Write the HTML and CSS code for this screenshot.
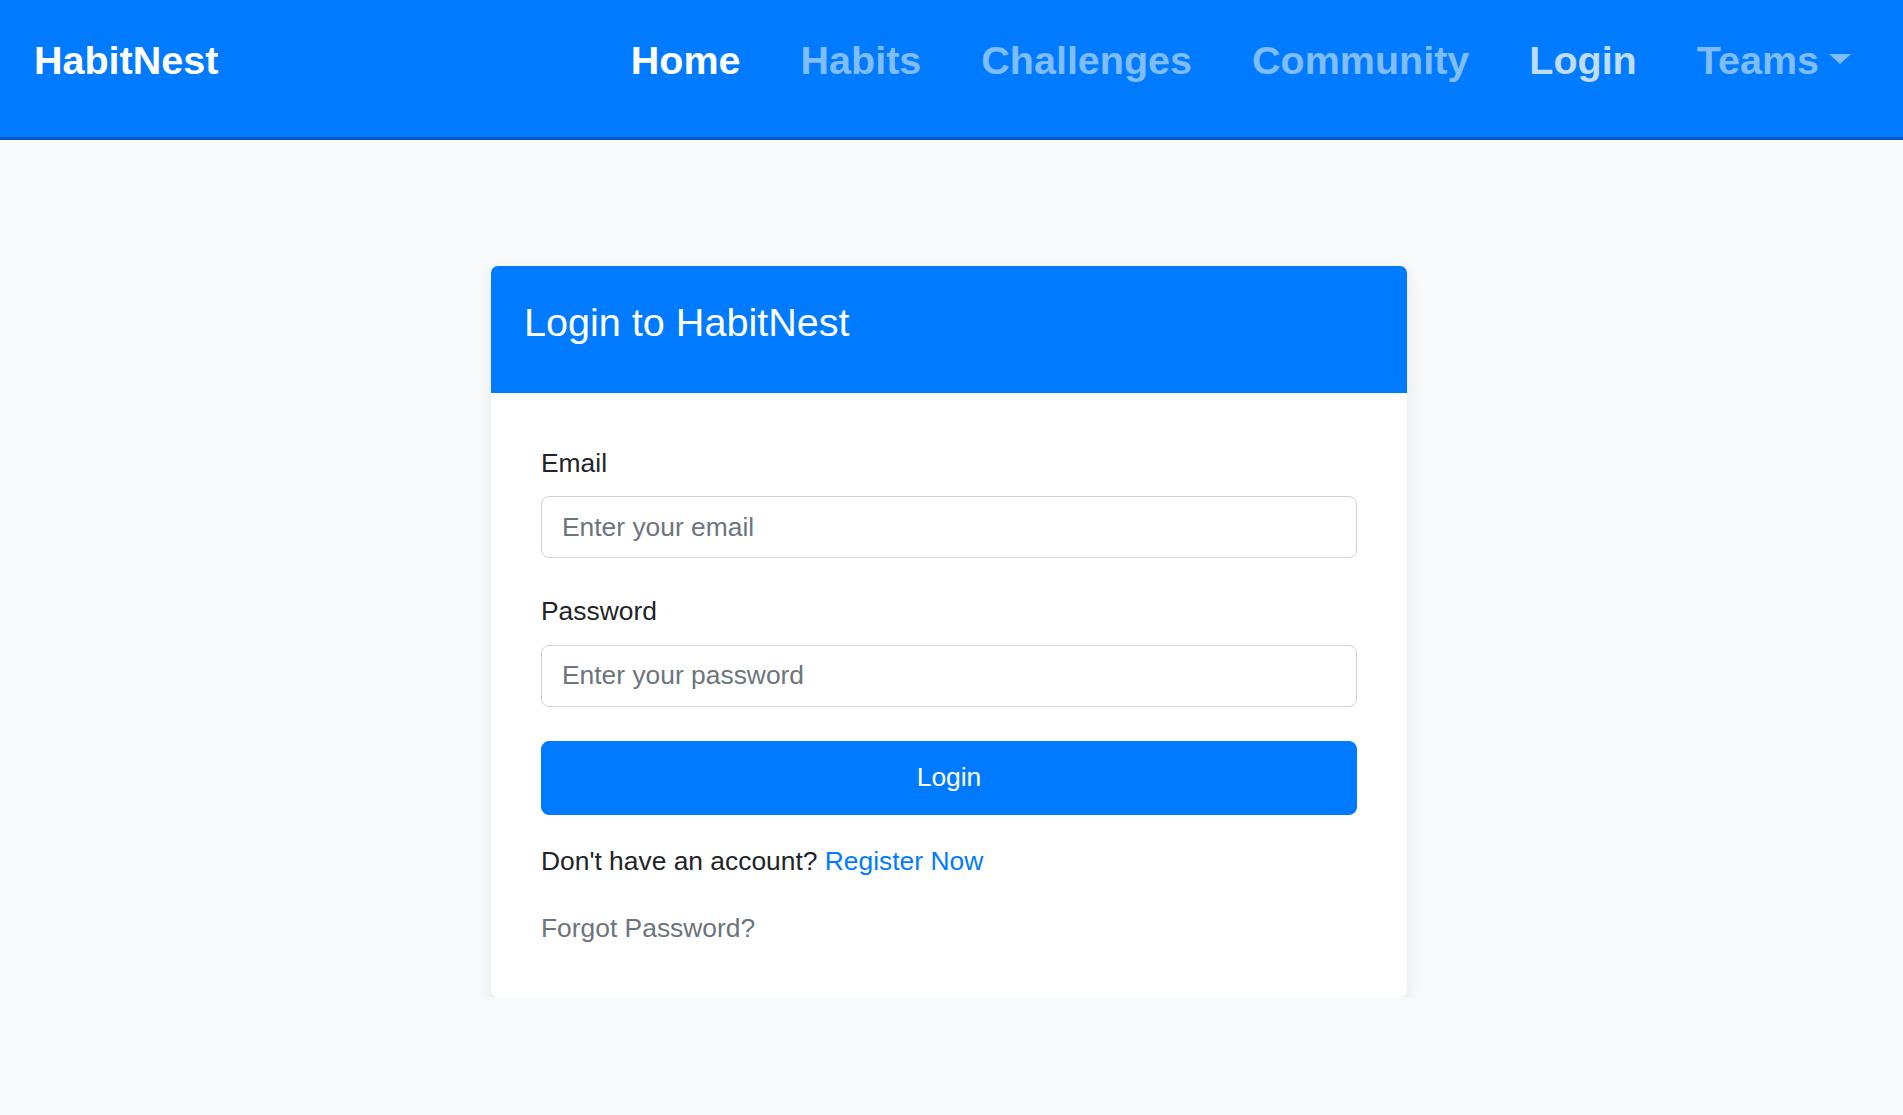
FILE: index.html
```html
<!DOCTYPE html>
<html lang="en">
<head>
<meta charset="utf-8">
<title>HabitNest - Login</title>
<link rel="stylesheet" href="styles.css">
</head>
<body>
<nav class="navbar">
  <a class="brand" href="#">HabitNest</a>
  <ul class="nav">
    <li><a class="nav-link active" href="#">Home</a></li>
    <li><a class="nav-link" href="#">Habits</a></li>
    <li><a class="nav-link" href="#">Challenges</a></li>
    <li><a class="nav-link" href="#">Community</a></li>
    <li><a class="nav-link bright" href="#">Login</a></li>
    <li><a class="nav-link" href="#">Teams<span class="caret"></span></a></li>
  </ul>
</nav>
<main class="page">
  <div class="card">
    <div class="card-header">
      <h3 class="card-title">Login to HabitNest</h3>
    </div>
    <div class="card-body">
      <form class="form">
        <div class="form-group">
          <label class="label" for="email">Email</label>
          <input class="input" id="email" type="email" placeholder="Enter your email">
        </div>
        <div class="form-group">
          <label class="label" for="password">Password</label>
          <input class="input" id="password" type="password" placeholder="Enter your password">
        </div>
        <button class="btn" type="button">Login</button>
      </form>
      <p class="text first">Don't have an account? <a class="link" href="#">Register Now</a></p>
      <p class="text last"><a class="muted" href="#">Forgot Password?</a></p>
    </div>
  </div>
</main>
</body>
</html>
```
FILE: styles.css
```css
* { box-sizing: border-box; }
html, body { margin: 0; padding: 0; }
body {
  background: #f8f9fa;
  font-family: "Liberation Sans", Arial, sans-serif;
  color: #212529;
  font-size: 26.4px;
  line-height: 1.5;
}
a { text-decoration: none; }

.navbar {
  height: 140px;
  background: #007bff;
  border-bottom: 3px solid #0059c0;
  display: flex;
  align-items: flex-start;
  justify-content: space-between;
  padding: 31px 52px 0 34px;
}
.brand {
  color: #fff;
  font-weight: 700;
  font-size: 39.5px;
  line-height: 1.5;
}
.nav {
  list-style: none;
  margin: 0;
  padding: 0;
  display: flex;
  gap: 60px;
}
.nav-link {
  color: rgba(255, 255, 255, 0.5);
  font-weight: 700;
  font-size: 39.5px;
  line-height: 1.5;
}
.nav-link.active { color: #fff; }
.nav-link.bright { color: rgba(255, 255, 255, 0.75); }
.caret {
  display: inline-block;
  margin-left: 10px;
  vertical-align: 10px;
  width: 0;
  height: 0;
  border-top: 10px solid rgba(255, 255, 255, 0.5);
  border-left: 11px solid transparent;
  border-right: 11px solid transparent;
}

.page {
  padding: 126px 0 0 491px;
}
.card {
  width: 916px;
  background: #fff;
  border-radius: 7px;
  box-shadow: 0 6px 16px rgba(0, 0, 0, 0.08);
}
.card-header {
  background: #007bff;
  border-radius: 7px 7px 0 0;
  padding: 33px 33px 46px;
}
.card-title {
  margin: 0;
  color: #fff;
  font-weight: 400;
  font-size: 39.6px;
  line-height: 1.2;
}
.card-body {
  padding: 51px 50px 48px;
}
.form { margin: 0; }
.form-group { margin-bottom: 34px; }
.label {
  display: block;
  margin-bottom: 13px;
}
.input {
  display: block;
  width: 100%;
  height: 62px;
  padding: 10px 20px;
  font-family: inherit;
  font-size: 26.4px;
  line-height: 1.5;
  color: #495057;
  background: #fff;
  border: 1px solid #ced4da;
  border-radius: 8px;
}
.input::placeholder { color: #6c757d; opacity: 1; }
.btn {
  display: block;
  width: 100%;
  height: 74px;
  padding: 0;
  border: 1px solid #007bff;
  border-radius: 8px;
  background: #007bff;
  color: #fff;
  font-family: inherit;
  font-size: 26.4px;
  line-height: 1.5;
}
.text { margin: 0; }
.text.first { margin-top: 27.5px; }
.text.last { margin-top: 27.5px; }
.link { color: #007bff; }
.muted { color: #6c757d; }
```
